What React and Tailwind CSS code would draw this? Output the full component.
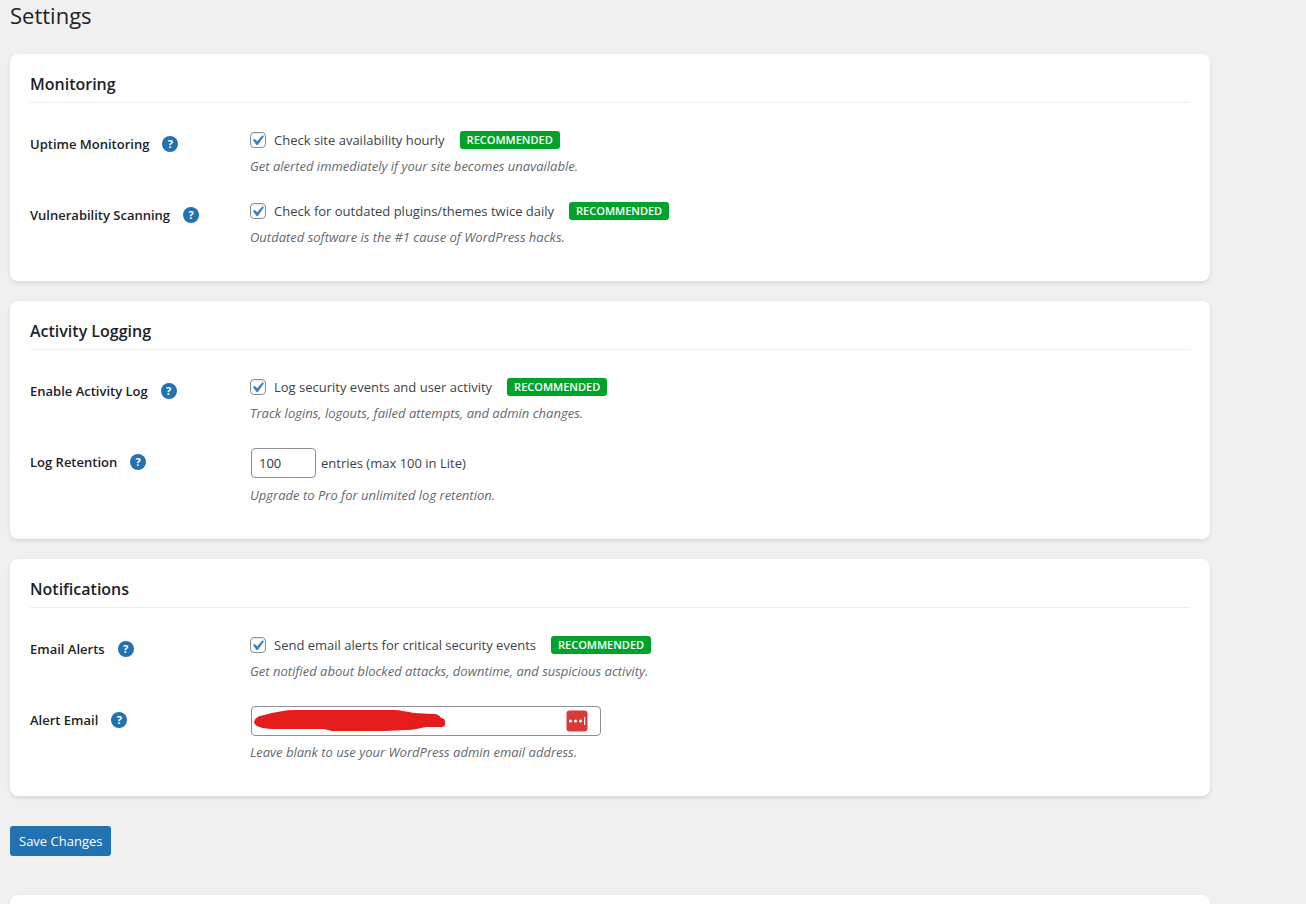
import React, { useState } from 'react';

const HelpTip = ({ label }) => (
  <button
    type="button"
    aria-label={`Help: ${label}`}
    className="flex size-4 items-center justify-center rounded-full bg-[#2271b1] text-[11px] leading-4 font-bold text-white"
  >
    ?
  </button>
);

const Card = ({ title, children }) => (
  <section className="rounded-lg bg-white px-5 pt-5 pb-[34px] shadow-[0_2px_4px_rgba(0,0,0,0.1)]">
    <h2 className="border-b border-[#eeeeee] pb-2 text-[16px] leading-5 font-semibold text-[#1d2327]">{title}</h2>
    <div className="mt-[27px] flex flex-col gap-[25px]">{children}</div>
  </section>
);

const Row = ({ id, label, description, children }) => (
  <div className="flex items-start">
    <div className="flex h-7 w-[220px] shrink-0 items-center gap-[13px]">
      <label htmlFor={id} className="text-[13px] leading-5 font-semibold text-[#1d2327]">
        {label}
      </label>
      <HelpTip label={label} />
    </div>
    <div className="min-w-0 flex-1">
      {children}
      <p className="mt-[6px] text-[13px] leading-5 text-[#646970] italic">{description}</p>
    </div>
  </div>
);

const CheckRow = ({ id, label, text, description }) => {
  const [checked, setChecked] = useState(true);

  return (
    <Row id={id} label={label} description={description}>
      <div className="flex h-5 items-center">
        <span className="grid size-4">
          <input
            id={id}
            type="checkbox"
            checked={checked}
            onChange={(e) => setChecked(e.target.checked)}
            className="col-start-1 row-start-1 size-4 appearance-none rounded-[4px] border border-[#8c8f94] bg-white shadow-[inset_0_1px_2px_rgba(0,0,0,0.1)]"
          />
          {checked && (
            <svg viewBox="2.86 1.9 15.24 15.24" className="pointer-events-none col-start-1 row-start-1 size-4" aria-hidden="true">
              <path d="M14.83 4.89l1.34.94-5.81 8.38H9.02L5.78 9.67l1.34-1.25 2.57 2.4z" fill="#3582c4" />
            </svg>
          )}
        </span>
        <label htmlFor={id} className="ml-2 text-[13px] leading-5">
          {text}
        </label>
        <span className="ml-[15px] rounded-[3px] bg-[#00a32a] px-[7px] text-[11px] leading-[18px] font-semibold text-white">
          RECOMMENDED
        </span>
      </div>
    </Row>
  );
};

const App = () => {
  const [retention, setRetention] = useState('100');
  const [email, setEmail] = useState('');

  return (
    <div className="flex min-h-screen flex-col bg-[#f0f0f0] px-[10px] font-['Open_Sans','Noto_Sans',sans-serif] text-[#3c434a]">
      <form className="flex w-full max-w-[1200px] flex-col" onSubmit={(e) => e.preventDefault()}>
        <h1 className="text-[22px] leading-[30px] text-[#1d2327]">Settings</h1>

        <div className="mt-6 flex flex-col gap-5">
          <Card title="Monitoring">
            <CheckRow
              id="uptime"
              label="Uptime Monitoring"
              text="Check site availability hourly"
              description="Get alerted immediately if your site becomes unavailable."
            />
            <CheckRow
              id="vulnerability"
              label="Vulnerability Scanning"
              text="Check for outdated plugins/themes twice daily"
              description="Outdated software is the #1 cause of WordPress hacks."
            />
          </Card>

          <Card title="Activity Logging">
            <CheckRow
              id="activity"
              label="Enable Activity Log"
              text="Log security events and user activity"
              description="Track logins, logouts, failed attempts, and admin changes."
            />
            <Row id="retention" label="Log Retention" description="Upgrade to Pro for unlimited log retention.">
              <div className="flex items-center gap-[5px] pb-px pl-px text-[13px] leading-5">
                <input
                  id="retention"
                  type="text"
                  inputMode="numeric"
                  value={retention}
                  onChange={(e) => setRetention(e.target.value)}
                  className="h-[30px] w-[65px] rounded-[4px] border border-[#8c8f94] bg-white px-[7px] text-[#2c3338]"
                />
                <span>entries (max 100 in Lite)</span>
              </div>
            </Row>
          </Card>

          <Card title="Notifications">
            <CheckRow
              id="alerts"
              label="Email Alerts"
              text="Send email alerts for critical security events"
              description="Get notified about blocked attacks, downtime, and suspicious activity."
            />
            <Row id="email" label="Alert Email" description="Leave blank to use your WordPress admin email address.">
              <div className="relative ml-px w-[350px] max-w-full">
                <input
                  id="email"
                  type="email"
                  value={email}
                  onChange={(e) => setEmail(e.target.value)}
                  className="block h-[30px] w-full rounded-[4px] border border-[#8c8f94] bg-white px-2 text-[13px] text-[#2c3338]"
                />
                {/* scribble hiding the address */}
                <svg viewBox="0 0 192 22" className="pointer-events-none absolute top-1 left-[3px] h-[22px] w-48" aria-hidden="true">
                  <path
                    d="M0 12C1 8 4 6 10 5C20 2 32 0 42 0L140 0C147 0 153 2 160 3L179 4C184 4 186 6 187 8C190 8 191 10 191 12C192 15 190 17 187 17L172 17C165 18 160 20 152 20L130 21L80 21C75 21 73 19 67 19L22 19C12 19 1 18 0 12Z"
                    fill="#e51c1c"
                  />
                  <path d="M158 12l1 1M161 11l1 0" stroke="#b81414" strokeWidth="0.6" />
                </svg>
                <button type="button" aria-label="Fill from password manager" className="absolute top-1 right-[13px] size-[22px]">
                  <svg viewBox="0 0 22 22" className="size-[22px]">
                    <rect x="0.5" y="0.5" width="21" height="21" rx="3" fill="#d83b37" />
                    <circle cx="4.5" cy="11" r="1.5" fill="#fff" />
                    <circle cx="9.5" cy="11" r="1.5" fill="#fff" />
                    <circle cx="14.5" cy="11" r="1.5" fill="#fff" />
                    <rect x="18" y="7" width="1.2" height="8" fill="#fff" />
                  </svg>
                </button>
              </div>
            </Row>
          </Card>
        </div>

        <button
          type="submit"
          className="mt-[30px] h-[30px] self-start rounded-[3px] bg-[#2271b1] px-[9px] text-[13px] leading-5 text-white"
        >
          Save Changes
        </button>
      </form>

      <section className="mt-[39px] w-full max-w-[1200px] flex-1 rounded-t-lg bg-white shadow-[0_2px_4px_rgba(0,0,0,0.1)]" />
    </div>
  );
};

export default App;
